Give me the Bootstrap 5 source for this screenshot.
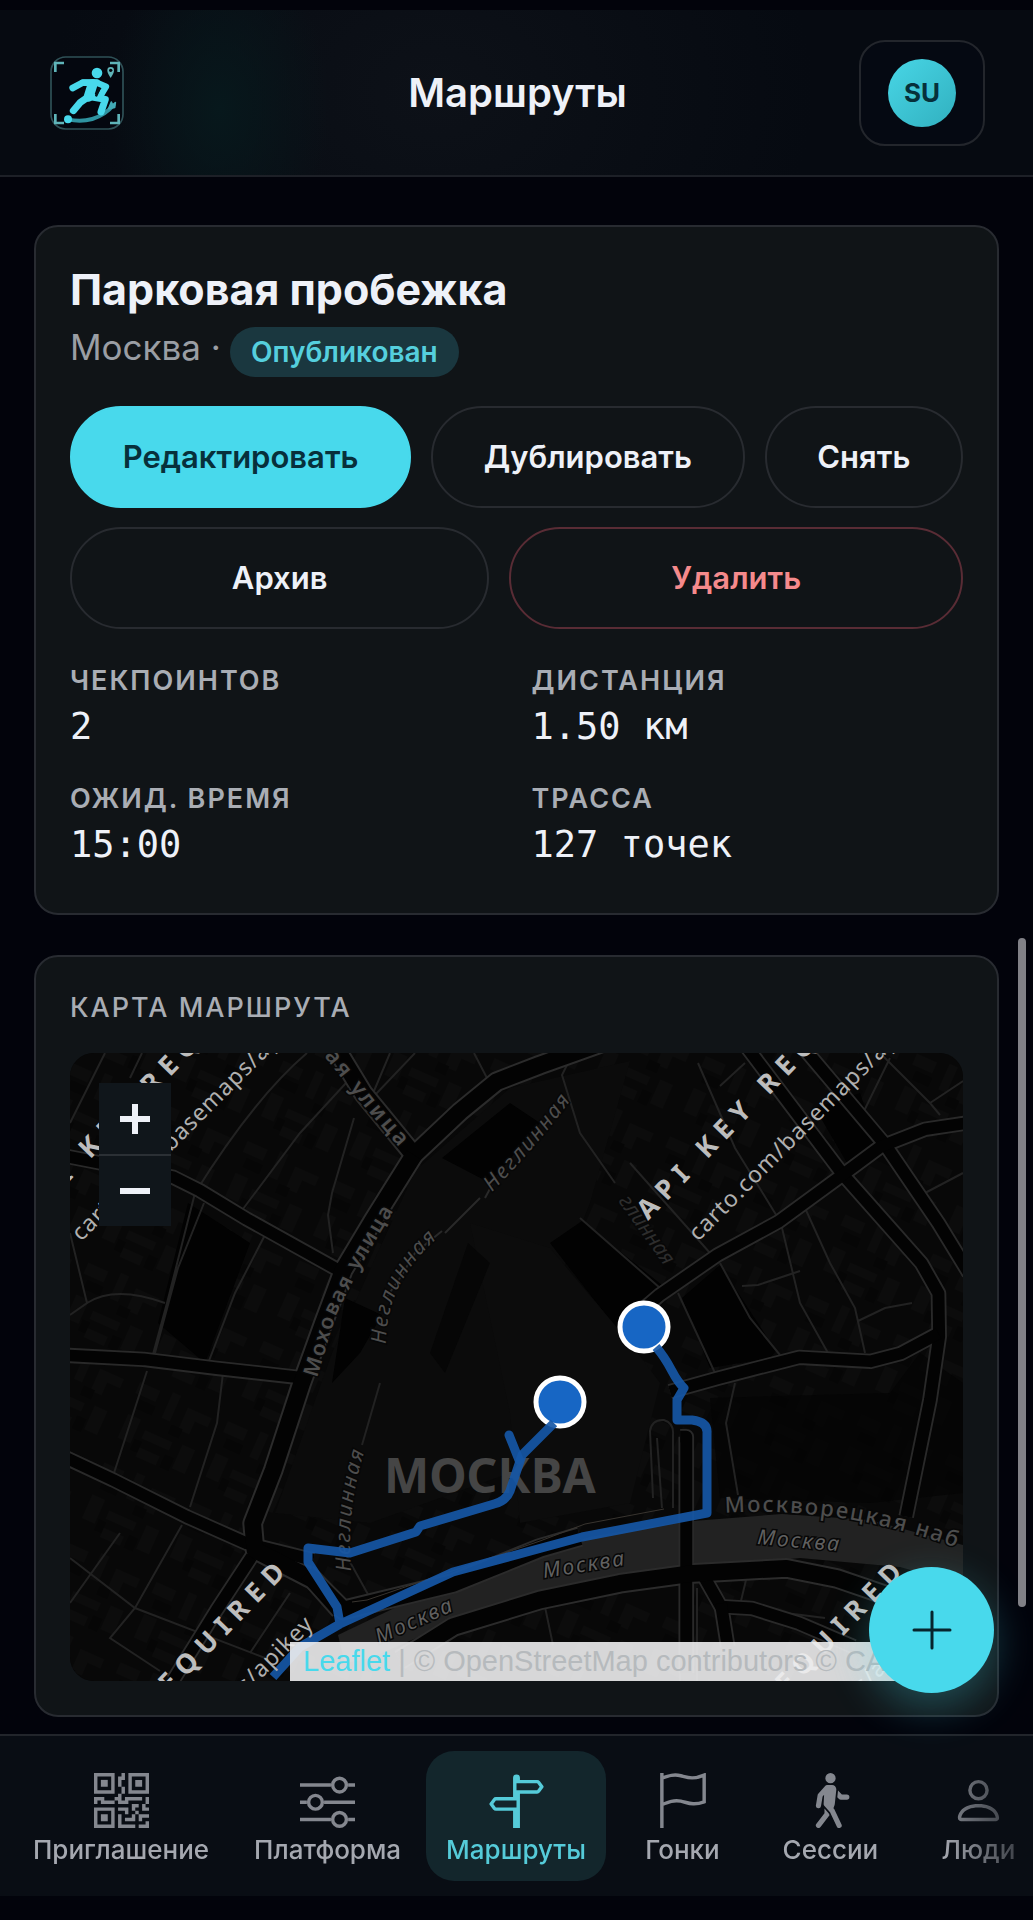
<!DOCTYPE html>
<html lang="ru" data-bs-theme="dark">
<head>
<meta charset="utf-8">
<meta name="viewport" content="width=device-width, initial-scale=1">
<title>Маршруты</title>
<link href="https://cdn.jsdelivr.net/npm/bootstrap@5.3.0/dist/css/bootstrap.min.css" rel="stylesheet">
<style>
  :root { --accent: #48d9ec; --ink: #eef1f8; --dim: #a9adb4; --line: #282b31; --panel: #101417; }
  body { background: #02030b; color: var(--ink); font-family: Inter, "Noto Sans", sans-serif; }
  .app-shell { padding: 10px 0 24px; }
  .topbar { height: 167px; padding: 0 48px 0 50px; border-bottom: 2px solid #1d2027;
    background: radial-gradient(ellipse 110px 170px at 220px 60%, #07181c, transparent), radial-gradient(ellipse 380px 300px at 42% 50%, #0d1118, #060a11); }
  .topbar > * { flex: 1 1 0; }
  .brand-logo { width: 74px; height: 74px; display: block; }
  .page-title { font-size: 40px; line-height: 48px; font-weight: 600; color: var(--ink); }
  .profile-btn { width: 126px; height: 106px; border: 2px solid #23262c; border-radius: 26px; background: #050912; }
  .avatar { width: 68px; height: 68px; color: #06303a; font-size: 26px; font-weight: 700; background: linear-gradient(135deg, #48d6e6, #31b0bf); }
  .content { padding: 48px 34px 16px; gap: 40px; }
  .panel { background: var(--panel); border: 2px solid var(--line); border-radius: 24px; padding: 34px; }
  .route-name { font-size: 43px; line-height: 56px; font-weight: 700; color: var(--ink); }
  .route-city { height: 56px; margin-top: 4px; font-size: 35px; line-height: 52px; color: #9a9ea4; font-weight: 400; gap: 9px; }
  .state-pill { background: #1a373f; color: #55cfdd; font-size: 28px; line-height: 50px; font-weight: 600; padding: 0 21px; }
  .actions { gap: 19px 20px; margin-top: 29px; }
  .act { height: 102px; padding: 0 48px; border: 2px solid #282b30; color: var(--ink); font-size: 31px; font-weight: 600; white-space: nowrap; }
  .act-main, .act-main:hover { background: var(--accent); border-color: var(--accent); color: #07303b; }
  .act-danger { color: #f58a8c; border-color: #592c35; }
  .facts { --bs-gutter-x: 30px; row-gap: 29px; margin-top: 36px; margin-bottom: 7px; }
  .fact-label { font-size: 27px; line-height: 32px; font-weight: 600; letter-spacing: 2px; color: var(--dim); }
  .fact-value { font-family: "DejaVu Sans Mono", monospace; font-size: 37px; line-height: 54px; padding-top: 3px; }
  .map-title { font-weight: 500; line-height: 34px; margin-bottom: 28px; }
  .map-box { height: 628px; border-radius: 24px; background: #090909; }
  .map-box > svg { width: 100%; height: 100%; display: block; }
  .zoomer { top: 30px; left: 29px; }
  .zoomer button { width: 72px; height: 71px; border: 0; background: #10161b; color: var(--ink); }
  .zoomer button + button { border-top: 2px solid #2b3035; height: 72px; }
  .credits { right: 0; bottom: 0; left: 220px; height: 39px; padding-left: 13px; background: rgba(238,238,240,.9); overflow: hidden; white-space: nowrap;
    font: 29px/38px "Liberation Sans", sans-serif; color: #b6babd; }
  .credits a { color: var(--accent); text-decoration: none; }
  .tabs { border-top: 2px solid #22252b; background: #090d14; }
  .tabs ul { padding: 15px 13px; gap: 5px; overflow: hidden;
    -webkit-mask-image: linear-gradient(to right, #000 calc(100% - 90px), rgba(0,0,0,.2)); mask-image: linear-gradient(to right, #000 calc(100% - 90px), rgba(0,0,0,.2)); }
  .tab { min-width: 143px; height: 130px; padding: 22px 20px 0; gap: 6px; border-radius: 28px; color: #a5a8b0; font-size: 26px; line-height: 32px; font-weight: 500; text-decoration: none; }
  .tab svg { width: 55px; height: 55px; fill: #84878f; color: #84878f; }
  .tab.active { background: #13262c; color: #55cbd9; }
  .tab.active svg { fill: #55cbd9; }
  .fab { right: 39px; bottom: 227px; width: 125px; height: 126px; border: 0; background: var(--accent); color: #07252d; box-shadow: 0 14px 44px rgba(72,217,236,.3); }
  .scroll-thumb { right: 7px; top: 938px; width: 8px; height: 669px; background: #818187; }
  .sea { fill: #222; }
  .lbl { font-family: "Noto Sans", sans-serif; font-size: 21px; fill: #4d4d4d; stroke: #070707; stroke-width: 3px; paint-order: stroke; }
  .mark-a { font: 700 27px "Noto Sans", sans-serif; letter-spacing: 8px; fill: #bdbdbd; }
  .mark-b { font: 400 23px "Noto Sans", sans-serif; letter-spacing: 1px; fill: #b0b0b0; }
</style>
</head>
<body>
<div class="app-shell d-flex flex-column min-vh-100 position-relative">
  <header class="topbar d-flex align-items-center">
    <div class="d-flex">
      <a href="#" aria-label="На главную">
        <svg class="brand-logo" viewBox="0 0 222 222" fill="none" stroke-linecap="round" stroke-linejoin="round">
          <rect x="3" y="3" width="216" height="216" rx="44" fill="#04070f" stroke="#2f5157" stroke-width="5"/>
          <g stroke="#5fb4b9" stroke-width="8" stroke-linecap="butt" stroke-linejoin="miter"><path d="M16 48V21H42M180 21H206V48M16 174V201H42M180 201H206V174"/></g>
          <path d="M54 190C102 201 155 190 190 148" stroke="#2f93a0" stroke-width="12"/>
          <path d="M176 158l8-20 4 10 8-8-2 14z" fill="#42aab6" stroke="#42aab6" stroke-width="5"/>
          <circle cx="54" cy="190" r="12" fill="#48d9ec"/>
          <g stroke="#48d9ec"><path d="M68 96L98 80H140" stroke-width="20"/><path d="M98 80H140L168 92L150 122" stroke-width="19"/><path d="M128 84L116 122" stroke-width="30"/><path d="M116 122L90 140L70 164" stroke-width="21"/><path d="M118 122L166 130L153 168" stroke-width="21"/></g>
          <path d="M147 99l-8 19" stroke="#04141b" stroke-width="8"/>
          <circle cx="141" cy="51" r="16" fill="#48d9ec"/>
          <path d="M182 66C174 54 172 49 172 43a10 10 0 0 1 20 0c0 6-2 11-10 23z" fill="#5fb4b9"/><circle cx="182" cy="43" r="5" fill="#04070f"/>
        </svg>
      </a>
    </div>
    <h1 class="page-title text-center m-0">Маршруты</h1>
    <div class="d-flex justify-content-end">
      <button type="button" class="profile-btn d-flex align-items-center justify-content-center p-0" aria-label="Профиль SU">
        <span class="avatar rounded-circle d-flex align-items-center justify-content-center">SU</span>
      </button>
    </div>
  </header>

  <main class="content flex-grow-1 d-flex flex-column">
    <section class="panel">
      <h2 class="route-name m-0">Парковая пробежка</h2>
      <div class="route-city d-flex"><span>Москва ·</span><span class="state-pill rounded-pill align-self-end">Опубликован</span></div>
      <div class="actions d-flex flex-wrap">
        <button type="button" class="btn act act-main rounded-pill flex-fill">Редактировать</button>
        <button type="button" class="btn act rounded-pill flex-fill">Дублировать</button>
        <button type="button" class="btn act rounded-pill flex-fill">Снять</button>
        <button type="button" class="btn act rounded-pill flex-fill">Архив</button>
        <button type="button" class="btn act act-danger rounded-pill flex-fill">Удалить</button>
      </div>
      <div class="facts row">
        <div class="col-6"><div class="fact-label">ЧЕКПОИНТОВ</div><div class="fact-value">2</div></div>
        <div class="col-6"><div class="fact-label">ДИСТАНЦИЯ</div><div class="fact-value">1.50 км</div></div>
        <div class="col-6"><div class="fact-label">ОЖИД. ВРЕМЯ</div><div class="fact-value">15:00</div></div>
        <div class="col-6"><div class="fact-label">ТРАССА</div><div class="fact-value">127 точек</div></div>
      </div>
    </section>

    <section class="panel">
      <h3 class="fact-label map-title mt-0">КАРТА МАРШРУТА</h3>
      <div class="map-box position-relative overflow-hidden">
        <svg viewBox="0 0 893 628" preserveAspectRatio="xMidYMid slice" role="img" aria-label="Карта маршрута">
          <defs>
            <pattern id="blocks" width="96" height="88" patternUnits="userSpaceOnUse" patternTransform="rotate(24)">
              <path fill="#0e0e0e" d="M6 8h22v12H6zM40 4h9v28h-9zM60 12h26v10H72v14H60zM8 42h14v26H8zM30 50h30v9H30zM70 48h14v26H70zM32 68h22v10H32z"/>
              <path fill="#040404" d="M12 24h18v10H12zM52 34h12v10H52zM24 62h8v12h-8zM58 64h10v14H58z"/>
            </pattern>
            <g id="roads" stroke-linejoin="round">
              <g transform="matrix(.3333 0 0 .3333 -10 -13)"><path d="M0 345L340 412L420 452L560 537L835 690"/><path d="M0 945L250 958L470 985L740 1015"/></g>
              <g transform="matrix(.3399 0 0 .3333 430 -13)"><path d="M725 20L1010 405L1240 670L1290 760L1292 890L1265 1080L1195 1430"/><path d="M890 20L1130 310L1290 550L1380 700"/><path d="M1400 245L1250 268L1120 320L1010 403L820 545L640 645L470 765L430 800"/><path d="M500 1055L640 1015L880 952L1090 964L1180 940L1290 880"/><path d="M530 1190H548V1900"/></g>
              <g transform="matrix(.3333 0 0 .3333 -10 317)"><path d="M0 255L160 330L380 440L560 520L760 570"/><path d="M575 560L470 720L340 930"/></g>
              <g transform="matrix(.3399 0 0 .3333 430 317)"><path d="M600 620L650 710L740 715L880 760L1040 830"/><path d="M650 700L670 830"/></g>
            </g>
            <g id="avenues" stroke-linejoin="round">
              <g transform="matrix(.3333 0 0 .3333 -10 -13)"><path d="M825 20L910 160L1062 345L1200 215L1310 125L1440 75L1650 0"/><path d="M1062 345L940 540L850 690L790 850L725 1030L640 1290L578 1450L585 1530L760 1620L840 1710"/></g>
              <g transform="matrix(.3333 0 0 .3333 -10 317)"><path d="M740 610L850 720L1180 640L1440 535L1560 500"/><path d="M1020 870L1180 770L1440 690L1680 640L1900 610L2180 595L2330 625L2520 690"/></g>
            </g>
            <path id="p1" d="M247 325L266 262L290 214L340 130"/><path id="p2" d="M254 3L298 58L354 123"/>
            <path id="p3" d="M316 291Q316 225 376 178"/><path id="p4" d="M422 139Q470 90 509 36"/><path id="p5" d="M281 518Q276 450 298 388"/>
            <path id="p6" d="M655 460Q780 452 905 502"/><path id="p7" d="M548 148L608 232"/>
          </defs>
          <rect width="893" height="628" fill="#080808"/><rect width="893" height="628" fill="url(#blocks)" opacity=".6"/>
          <path fill="#0b0b0b" d="M345 118L440 35L560 8L520 150L480 250L440 420L300 470L205 460L262 300Z"/>
          <path fill="#020202" d="M372 105L440 50L470 70L420 130ZM480 190L512 168L592 232L565 262L550 280ZM612 245L650 212L706 298L700 305L640 315ZM88 270L118 150L180 190L135 310ZM275 245L312 262L290 300L262 330ZM790 40L810 100L780 115L745 55Z"/>
          <path fill="#0c0c0c" d="M400 170L480 195L560 290L590 330L560 450L450 470L440 360Z"/>
          <path fill="#040404" d="M398 190L420 210L375 320L360 300ZM640 345L820 340L850 300L893 330V440L800 450L650 445Z" opacity=".7"/>
          <path class="sea" d="M268 582L383 527L470 500L520 484L610 469L712 461L800 467L893 492V532L830 514L730 505L640 514L490 534L430 549L300 605L275 610Z"/>
          <g fill="none" stroke="#222" stroke-width="2">
            <path d="M72 0L60 25M35 0L0 70M237 0C190 40 150 100 125 140L97 250L82 305M276 30L230 80L170 160M320 0L304 38M345 0L305 42M404 0L418 27M134 150L108 215L85 300M196 180L165 240L137 313M0 180L17 250L0 262M17 250Q45 232 95 250M77 318L44 420M153 320L147 370L120 454M112 472L65 555L40 585L90 618M0 505L65 555L195 605M50 480L0 550M284 65L262 140L258 162L263 200"/>
            <path d="M497 12L492 22L510 80L545 130M628 10L665 95L708 165M650 33L675 10M560 110L640 200M735 155L760 210L785 255L795 300M712 175L730 250L758 300M650 210L680 265L710 302M672 233L688 232L730 218M788 268L815 255L842 250M510 165L590 235M608 240L645 320M810 0L860 50L870 62M860 50L893 28M820 5L793 60M855 140L893 120M665 330L656 370L668 442M310 330L292 392M210 525Q240 500 260 560M180 600L220 540M275 500L300 545"/>
            <path d="M583 445L580 378Q582 366 594 367Q604 370 603 382V455M592 455L587 385M640 530L652 552L755 565M676 527L670 552M475 554L483 592M610 535V628M627 535V628"/>
          </g>
          <path d="M372 178L345 200L330 225L316 245M410 145L375 180M422 132L415 145" fill="none" stroke="#292929" stroke-width="2"/>
          <g fill="none">
            <use href="#roads" stroke="#292929" stroke-width="46"/>
            <use href="#avenues" stroke="#2b2b2b" stroke-width="62"/>
            <use href="#roads" stroke="#030303" stroke-width="35"/>
            <use href="#avenues" stroke="#030303" stroke-width="50"/>
            <path d="M282 549L297 547L470 488L515 471L594 456" stroke="#38342f" stroke-width="1"/>
          </g>
          <text x="314" y="440" style="font:700 48px 'Noto Sans',sans-serif" fill="#454545">МОСКВА</text>
          <g class="lbl" style="font-weight:600;letter-spacing:2px"><text><textPath href="#p1">Моховая улица</textPath></text></g>
          <g class="lbl" style="font-weight:600;font-size:22px;letter-spacing:3px"><text><textPath href="#p2">ая улица</textPath></text></g>
          <g class="lbl" style="font-style:italic;letter-spacing:2px"><text><textPath href="#p3">Неглинная</textPath></text><text><textPath href="#p4">Неглинная</textPath></text><text><textPath href="#p5">Неглинная</textPath></text></g>
          <g class="lbl" style="font-style:italic;fill:#2d2d2d"><text><textPath href="#p7">глинная</textPath></text></g>
          <g class="lbl" style="letter-spacing:2px;font-weight:500;font-size:22px"><text><textPath href="#p6">Москворецкая наб</textPath></text></g>
          <g class="lbl" style="font-style:italic;fill:#606060;letter-spacing:2px"><text transform="translate(474 525) rotate(-9)">Москва</text><text transform="translate(687 491) rotate(5)">Москва</text><text transform="translate(309 591) rotate(-24)">Москва</text></g>
          <path d="M439 382L449 407" fill="none" stroke="#1657a6" stroke-opacity=".92" stroke-width="9" stroke-linecap="round"/>
          <g stroke="#fff" stroke-width="5" fill="#1766c4"><circle cx="574" cy="274" r="24"/><circle cx="490" cy="349" r="24"/></g>
          <path d="M586 294C602 312 602 324 614 335L607 347V367H622Q638 369 637 380V460L512 484L383 519L270 571L230 594L203 624M484 370L452 402L440 438Q436 448 424 451L350 473L346 479L280 500L238 495V509L267 554L270 571" fill="none" stroke="#1657a6" stroke-opacity=".92" stroke-width="9" stroke-linejoin="round"/>
          <g class="mark-a">
            <text transform="translate(-39 168) rotate(-46)">API KEY REQUIRED</text><text transform="translate(578 168) rotate(-46)">API KEY REQUIRED</text>
            <text transform="translate(-39 785) rotate(-46)">API KEY REQUIRED</text><text transform="translate(578 785) rotate(-46)">API KEY REQUIRED</text>
          </g>
          <g class="mark-b">
            <text transform="translate(11 189) rotate(-45)">carto.com/basemaps/apikey</text><text transform="translate(628 189) rotate(-45)">carto.com/basemaps/apikey</text>
            <text transform="translate(11 806) rotate(-45)">carto.com/basemaps/apikey</text><text transform="translate(628 806) rotate(-45)">carto.com/basemaps/apikey</text>
          </g>
        </svg>
        <div class="zoomer position-absolute d-flex flex-column">
          <button type="button" class="p-0" aria-label="Приблизить"><svg width="30" height="30" viewBox="0 0 30 30" stroke="currentColor" stroke-width="6"><path d="M0 15H30M15 0V30"/></svg></button>
          <button type="button" class="p-0" aria-label="Отдалить"><svg width="30" height="30" viewBox="0 0 30 30" stroke="currentColor" stroke-width="6"><path d="M0 15H30"/></svg></button>
        </div>
        <div class="credits position-absolute"><a href="#">Leaflet</a> | © OpenStreetMap contributors © CARTO</div>
      </div>
    </section>
  </main>

  <nav class="tabs" aria-label="Разделы">
    <ul class="d-flex list-unstyled m-0">
      <li><a class="tab d-flex flex-column align-items-center" href="#"><svg viewBox="0 0 16 16"><path d="M2 2h2v2H2z"/><path d="M6 0v6H0V0zM5 1H1v4h4zM4 12H2v2h2z"/><path d="M6 10v6H0v-6zm-5 1v4h4v-4zm11-9h2v2h-2z"/><path d="M10 0v6h6V0zm5 1v4h-4V1zM8 1V0h1v2H8v2H7V1zm0 5V4h1v2zM6 8V7h1V6h1v2h1V7h5v1h-4v1H7V8zm0 0v1H2V8H1v1H0V7h3v1zm10 1h-1V7h1zm-1 0h-1v2h2v-1h-1zm-4 0h2v1h-1v1h-1zm2 3v-1h-1v1h-1v1H9v1h3v-2zm0 0h3v1h-2v1h-1zm-4-1v1h1v-2H7v1z"/><path d="M7 12h1v3h4v1H7zm9 2v2h-3v-1h2v-1z"/></svg>Приглашение</a></li>
      <li><a class="tab d-flex flex-column align-items-center" href="#"><svg viewBox="0 0 16 16"><path fill="none" stroke="currentColor" d="M0 3.500H9M14 3.500H16M0 8.500H2M7 8.500H16M0 13.500H9M14 13.500H16"/><g fill="none" stroke="currentColor"><circle cx="11.500" cy="3.500" r="2"/><circle cx="4.500" cy="8.500" r="2"/><circle cx="11.500" cy="13.500" r="2"/></g></svg>Платформа</a></li>
      <li><a class="tab active d-flex flex-column align-items-center" href="#" aria-current="page"><svg viewBox="0 0 16 16"><path d="M7 7V1.414a1 1 0 0 1 2 0V2h5a1 1 0 0 1 .8.4l.975 1.3a.5.5 0 0 1 0 .6L14.8 5.600a1 1 0 0 1-.8.4H9v10H7v-5H2a1 1 0 0 1-.8-.4L.225 9.300a.5.5 0 0 1 0-.6L1.200 7.400A1 1 0 0 1 2 7zm1 3V8H2l-.75 1L2 10zm0-5h6l.75-1L14 3H8z"/></svg>Маршруты</a></li>
      <li><a class="tab d-flex flex-column align-items-center" href="#"><svg viewBox="0 0 16 16"><path fill="none" stroke="currentColor" d="M2 0V16M2 1.500C4 .8 5.500 .3 7.500 .8S11 2 14.300 .6V8.400C11 9.600 9.500 8.600 7.500 8.200S4 8.400 2 9.200"/></svg>Гонки</a></li>
      <li><a class="tab d-flex flex-column align-items-center" href="#"><svg viewBox="0 0 16 16"><path d="M9.500 1.500a1.500 1.500 0 1 1-3 0 1.500 1.500 0 0 1 3 0M6.440 3.752A.75.75 0 0 1 7 3.500h1.445c.742 0 1.320.643 1.243 1.380l-.43 4.083a1.800 1.800 0 0 1-.088.395l-.318.906.213.242a.8.8 0 0 1 .114.175l2 4.250a.75.75 0 1 1-1.357.638l-1.956-4.154-1.680-1.921A.75.75 0 0 1 6 8.960l.138-2.613-.435.489-.464 2.786a.75.75 0 1 1-1.480-.246l.5-3a.75.75 0 0 1 .18-.375l2-2.250Z"/><path d="M6.250 11.745v-1.418l1.204 1.375.261.524a.8.8 0 0 1-.12.231l-2.500 3.250a.75.75 0 1 1-1.190-.914zm4.220-4.215-.494-.494.205-1.843.006-.067 1.124 1.124h1.440a.75.75 0 0 1 0 1.500H11a.75.75 0 0 1-.531-.22Z"/></svg>Сессии</a></li>
      <li><a class="tab d-flex flex-column align-items-center" href="#"><svg viewBox="0 0 16 16"><path d="M8 8a3 3 0 1 0 0-6 3 3 0 0 0 0 6m2-3a2 2 0 1 1-4 0 2 2 0 0 1 4 0m4 8c0 1-1 1-1 1H3s-1 0-1-1 1-4 6-4 6 3 6 4m-1-.004c-.001-.246-.154-.986-.832-1.664C11.516 10.680 10.289 10 8 10s-3.516.68-4.168 1.332c-.678.678-.83 1.418-.832 1.664z"/></svg>Люди</a></li>
    </ul>
  </nav>

  <button type="button" class="fab rounded-circle position-absolute p-0" aria-label="Добавить маршрут"><svg width="40" height="40" viewBox="0 0 40 40" stroke="currentColor" stroke-width="3" stroke-linecap="round"><path d="M2 20H38M20 2V38"/></svg></button>
  <div class="scroll-thumb position-absolute rounded-pill"></div>
</div>
<script src="https://cdn.jsdelivr.net/npm/bootstrap@5.3.0/dist/js/bootstrap.bundle.min.js"></script>
</body>
</html>
